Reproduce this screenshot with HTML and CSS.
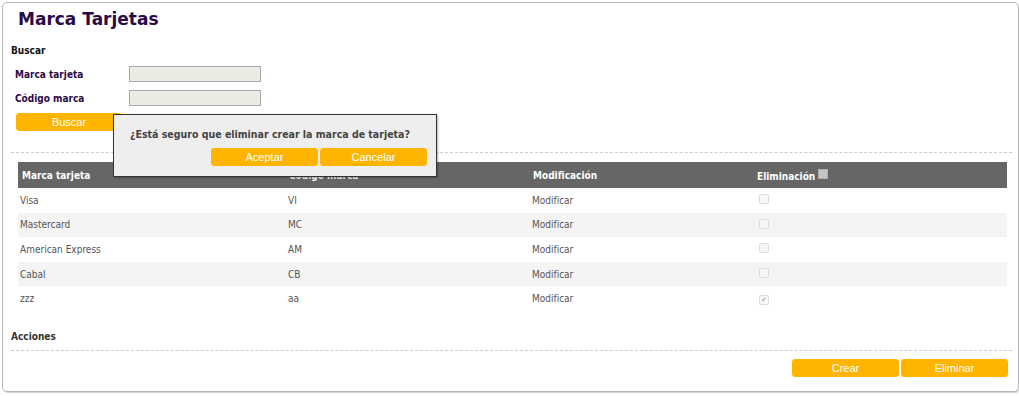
FILE: index.html
```html
<!DOCTYPE html>
<html lang="es">
<head>
    <meta charset="UTF-8">
    <title>Marca Tarjetas</title>
    <link rel="stylesheet" href="styles.css">
</head>
<body>
    <div class="panel">
        <h1>Marca Tarjetas</h1>

        <h4 class="section search-title">Buscar</h4>
        <div class="field">
            <label>Marca tarjeta</label>
            <input type="text" class="txt">
        </div>
        <div class="field">
            <label>Código marca</label>
            <input type="text" class="txt">
        </div>
        <button class="btn btn-search">Buscar</button>

        <hr class="sep">

        <table class="grid">
            <thead>
                <tr>
                    <th class="c1">Marca tarjeta</th>
                    <th class="c2">Código marca</th>
                    <th class="c3">Modificación</th>
                    <th class="c4">Eliminación <span class="hchk"></span></th>
                </tr>
            </thead>
            <tbody>
                <tr><td>Visa</td><td>VI</td><td>Modificar</td><td><span class="chk"></span></td></tr>
                <tr><td>Mastercard</td><td>MC</td><td>Modificar</td><td><span class="chk"></span></td></tr>
                <tr><td>American Express</td><td>AM</td><td>Modificar</td><td><span class="chk"></span></td></tr>
                <tr><td>Cabal</td><td>CB</td><td>Modificar</td><td><span class="chk"></span></td></tr>
                <tr><td>zzz</td><td>aa</td><td>Modificar</td><td><span class="chk on">&#10004;</span></td></tr>
            </tbody>
        </table>

        <h4 class="section actions-title">Acciones</h4>
        <hr class="sep">
        <div class="actions">
            <button class="btn">Crear</button>
            <button class="btn">Eliminar</button>
        </div>

        <div class="dialog">
            <p>¿Está seguro que eliminar crear la marca de tarjeta?</p>
            <div class="dialog-buttons">
                <button class="btn">Aceptar</button>
                <button class="btn">Cancelar</button>
            </div>
        </div>
    </div>
</body>
</html>
```

FILE: styles.css
```css
body {
    margin: 0;
    padding: 2px;
    font-family: "DejaVu Sans Condensed", "DejaVu Sans", sans-serif;
    font-size: 10px;
    color: #444;
    background: #fff;
}
.panel {
    position: relative;
    width: 1001px;
    height: 388px;
    border: 1px solid #b5b5b5;
    border-radius: 5px;
    box-shadow: 1px 1px 0 #d4d4d4;
    padding: 0 6px 0 8px;
}
h1 {
    margin: 0;
    padding: 6px 0 0 7px;
    height: 31px;
    font-family: "DejaVu Sans", sans-serif;
    font-size: 17px;
    font-weight: bold;
    color: #2b0a47;
}
.section {
    margin: 5px 0 0 0;
    height: 14px;
    font-size: 10px;
    font-weight: bold;
    color: #111;
}
.search-title {
    margin-bottom: 3px;
}
.field {
    display: flex;
    align-items: center;
    height: 24px;
    padding-left: 4px;
}
.field label {
    width: 114px;
    font-weight: bold;
    color: #2b0a47;
}
.txt {
    width: 130px;
    height: 14px;
    margin: 0;
    padding: 0;
    border: 1px solid #aaa;
    background: #ebebe4;
}
.btn {
    width: 107px;
    height: 18px;
    padding: 0;
    border: 1px solid #ffb400;
    border-radius: 3px;
    background: #ffb400;
    color: #fff;
    font-family: "Liberation Sans", Arial, sans-serif;
    font-size: 11px;
    cursor: pointer;
}
.btn-search {
    display: block;
    margin: 3px 0 0 5px;
    width: 106px;
}
.sep {
    margin: 21px 0 0 0;
    border: 0;
    border-top: 1px dashed #ccc;
    height: 0;
}
.grid {
    width: 989px;
    margin: 9px 0 0 7px;
    border-collapse: collapse;
}
.grid th {
    height: 26px;
    background: #666;
    color: #fff;
    text-align: left;
    font-weight: bold;
    padding: 0 3px;
}
.grid th.c1 {
    padding-left: 4px;
}
.grid th.c4 {
    padding-left: 2px;
}
.grid td {
    height: 24.6px;
    padding: 0 2px;
    color: #555;
}
.grid tbody tr:nth-child(even) td {
    background: #f4f4f4;
}
.grid .c1 { width: 261px; }
.grid .c2 { width: 238px; }
.grid .c3 { width: 219px; }
.hchk {
    display: inline-block;
    width: 8px;
    height: 8px;
    background: #c4c4c4;
    border: 1px solid #b0b0b0;
    vertical-align: 1px;
}
.chk {
    display: inline-block;
    width: 8px;
    height: 8px;
    margin-left: 2px;
    border: 1px solid #ddd;
    border-radius: 2px;
    background: #f7f7f7;
    font-size: 7px;
    line-height: 8px;
    text-align: center;
    color: #aaa;
}
.actions-title {
    margin-top: 20px;
    color: #333;
}
.actions-title + .sep {
    margin-top: 5px;
}
.actions {
    display: flex;
    justify-content: flex-end;
    gap: 2px;
    margin: 8px 4px 0 0;
}
.dialog {
    position: absolute;
    left: 110px;
    top: 111px;
    width: 322px;
    height: 61px;
    background: #eee;
    border: 1px solid #333;
    box-shadow: 1px 1px 2px rgba(0, 0, 0, 0.3);
}
.dialog p {
    margin: 13px 0 0 16px;
    font-weight: bold;
    font-size: 10.5px;
    color: #444;
}
.dialog-buttons {
    display: flex;
    justify-content: flex-end;
    gap: 2px;
    margin: 8px 9px 0 0;
}
```
